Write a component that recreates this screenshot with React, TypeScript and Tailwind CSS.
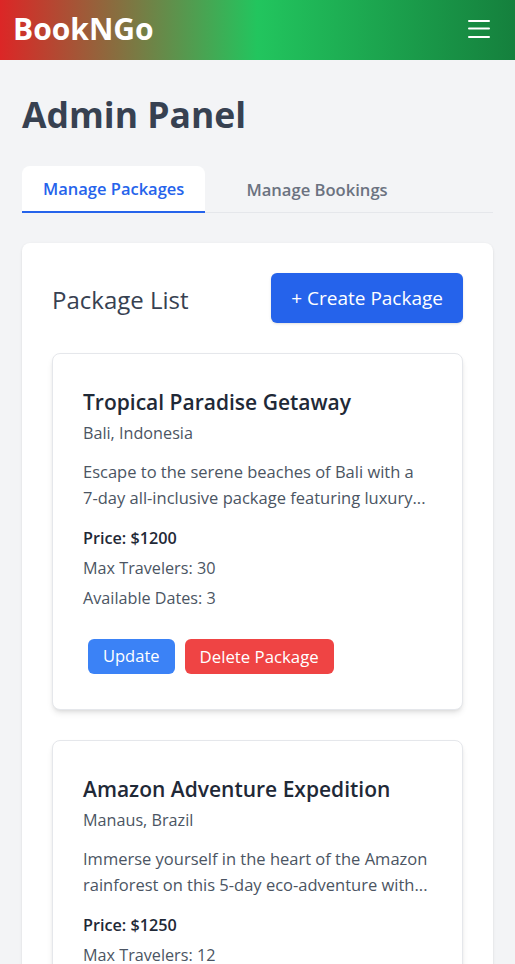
import React from "react";

const font = { fontFamily: '"Open Sans", "Noto Sans", sans-serif' };

function PackageCard(p: { title: string; loc: string; desc1: string; desc2: string; price: string; max: number; dates: number }) {
  return (
    <div className="rounded-lg border border-[#e5e7eb] bg-white p-[30px] shadow-md">
      <h3 className="text-[21px] font-semibold leading-[36px] text-[#1f2937]">{p.title}</h3>
      <p className="mt-[1px] text-[16.2px] leading-[24px] text-[#4b5563]">{p.loc}</p>
      <p className="mt-[14px] text-[16.5px] leading-[26px] text-[#4b5563]">
        {p.desc1}
        <br />
        {p.desc2}
      </p>
      <p className="mt-[12px] text-[16.2px] font-semibold leading-[30px] text-[#1f2937]">Price: ${p.price}</p>
      <p className="text-[16.2px] leading-[30px] text-[#4b5563]">Max Travelers: {p.max}</p>
      <p className="text-[16.2px] leading-[30px] text-[#4b5563]">Available Dates: {p.dates}</p>
      <div className="mt-[21px] flex">
        <button className="m-[5px] h-[35px] rounded-md bg-[#3b82f6] px-[15px] text-[16.5px] text-white">Update</button>
        <button className="m-[5px] h-[35px] rounded-md bg-[#ef4444] px-[15px] text-[16.8px] text-white">Delete Package</button>
      </div>
    </div>
  );
}

export default function App() {
  return (
    <div className="min-h-[964px] bg-[#f3f4f6]" style={font}>
      <header className="flex h-[60px] items-center justify-between bg-[linear-gradient(to_right,#dc2626,#22c55e_50%,#15803d)] pl-[13px] pr-[24px]">
        <span className="-mt-[2px] text-[30px] font-bold leading-none text-white">BookNGo</span>
        <svg width="24" height="20" viewBox="0 0 24 20" className="-mt-[2px]">
          <rect x="1" y="1" width="22" height="2" rx="1" fill="white" />
          <rect x="1" y="8.5" width="22" height="2" rx="1" fill="white" />
          <rect x="1" y="17" width="22" height="2" rx="1" fill="white" />
        </svg>
      </header>
      <main className="px-[22px] pt-[27px]">
        <h1 className="text-[35.5px] font-bold leading-[54px] text-[#374151]">Admin Panel</h1>
        <div className="mt-[25px] flex border-b border-[#e5e7eb]">
          <button className="-mb-px h-[47px] rounded-t-lg border-b-2 border-[#2563eb] bg-white px-[21px] pt-[2px] text-[16.5px] font-semibold text-[#2563eb]">
            Manage Packages
          </button>
          <button className="-mb-px h-[47px] px-[41px] pt-[2px] text-[16.6px] font-semibold text-[#6b7280]">Manage Bookings</button>
        </div>
        <section className="mt-[30px] rounded-lg bg-white p-[30px] shadow-sm">
          <div className="flex items-center justify-between">
            <h2 className="pt-[3px] text-[24px] font-medium text-[#374151]">Package List</h2>
            <button className="h-[50px] rounded-md bg-[#2563eb] px-[20px] text-[19px] text-white shadow-sm">+ Create Package</button>
          </div>
          <div className="mt-[30px] flex flex-col gap-[30px]">
            <PackageCard
              title="Tropical Paradise Getaway"
              loc="Bali, Indonesia"
              desc1="Escape to the serene beaches of Bali with a"
              desc2="7-day all-inclusive package featuring luxury..."
              price="1200"
              max={30}
              dates={3}
            />
            <PackageCard
              title="Amazon Adventure Expedition"
              loc="Manaus, Brazil"
              desc1="Immerse yourself in the heart of the Amazon"
              desc2="rainforest on this 5-day eco-adventure with..."
              price="1250"
              max={12}
              dates={4}
            />
          </div>
        </section>
      </main>
    </div>
  );
}
